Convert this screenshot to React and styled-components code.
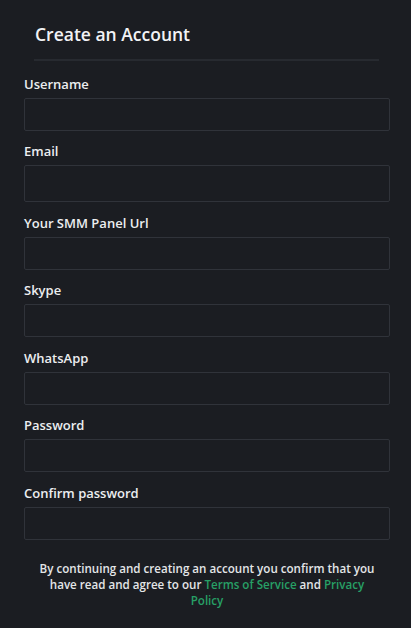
import React from "react"
import styled, { createGlobalStyle } from "styled-components"

const GlobalStyle = createGlobalStyle`
  html, body {
    margin: 0;
    padding: 0;
    background-color: #1b1d22;
  }
  body {
    font-family: "Open Sans", "Noto Sans", sans-serif;
    color: #eceef0;
  }
  * {
    box-sizing: border-box;
  }
`

const Page = styled.div`
  min-height: 628px;
  background-color: #1b1d22;
  padding: 0 21px 0 24px;
`

const Header = styled.div`
  margin: 0 11px 0 10px;
  padding: 22px 0 13px 1px;
  border-bottom: 2px solid #272a30;
`

const Title = styled.h2`
  margin: 0;
  font-size: 17.5px;
  font-weight: 600;
  line-height: 24px;
  color: #f2f3f5;
`

const Form = styled.form`
  padding-top: 13.5px;
`

const Field = styled.div`
  display: flex;
  flex-direction: column;
  gap: 5px;
  margin-bottom: 11.5px;
`

const Label = styled.label`
  font-size: 13px;
  font-weight: 600;
  line-height: 18px;
  color: #eceef0;
`

// the email box renders a little taller than the others in the original
const Input = styled.input`
  width: 100%;
  height: ${(props) => (props.$tall ? "37px" : "33px")};
  background-color: #1b1d22;
  border: 1px solid #30333a;
  border-radius: 2px;
  outline: none;
  color: #eceef0;
  font: inherit;
  padding: 0 10px;
`

const Note = styled.p`
  margin: 21px 14px 0;
  text-align: center;
  font-size: 11.6px;
  font-weight: 600;
  line-height: 16px;
  color: #e4e6e8;
`

const Link = styled.a`
  color: #27a066;
  text-decoration: none;
`

const fields = [
  { name: "username", label: "Username", type: "text" },
  { name: "email", label: "Email", type: "email", tall: true },
  { name: "panel", label: "Your SMM Panel Url", type: "text" },
  { name: "skype", label: "Skype", type: "text" },
  { name: "whatsapp", label: "WhatsApp", type: "text" },
  { name: "password", label: "Password", type: "password" },
  { name: "confirm", label: "Confirm password", type: "password" },
]

const App = () => {
  return (
    <>
      <GlobalStyle />
      <Page>
        <Header>
          <Title>Create an Account</Title>
        </Header>
        <Form onSubmit={(e) => e.preventDefault()}>
          {fields.map((field) => {
            return (
              <Field key={field.name}>
                <Label htmlFor={field.name}>{field.label}</Label>
                <Input
                  id={field.name}
                  name={field.name}
                  type={field.type}
                  $tall={field.tall}
                />
              </Field>
            )
          })}
        </Form>
        <Note>
          By continuing and creating an account you confirm that you have read
          and agree to our <Link href="#">Terms of Service</Link> and{" "}
          <Link href="#">Privacy Policy</Link>
        </Note>
      </Page>
    </>
  )
}

export default App
